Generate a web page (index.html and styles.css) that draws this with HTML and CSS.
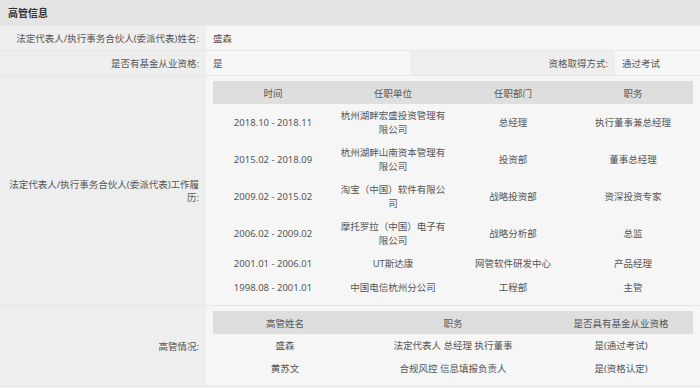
FILE: index.html
```html
<!DOCTYPE html>
<html lang="zh-CN">
<head>
<meta charset="utf-8">
<title>高管信息</title>
<link rel="stylesheet" href="styles.css">
</head>
<body>
<section class="panel">
  <h2 class="panel-title">高管信息</h2>
  <div class="row row-2col">
    <div class="label">法定代表人/执行事务合伙人(委派代表)姓名:</div>
    <div class="value">盛森</div>
  </div>
  <div class="row row-4col">
    <div class="label">是否有基金从业资格:</div>
    <div class="value">是</div>
    <div class="label">资格取得方式:</div>
    <div class="value">通过考试</div>
  </div>
  <div class="row row-2col">
    <div class="label label-wrap">法定代表人/执行事务合伙人(委派代表)工作履历:</div>
    <div class="value value-table">
      <table class="sub work">
        <thead>
          <tr><th>时间</th><th>任职单位</th><th>任职部门</th><th>职务</th></tr>
        </thead>
        <tbody>
          <tr><td>2018.10 - 2018.11</td><td>杭州湖畔宏盛投资管理有限公司</td><td>总经理</td><td>执行董事兼总经理</td></tr>
          <tr><td>2015.02 - 2018.09</td><td>杭州湖畔山南资本管理有限公司</td><td>投资部</td><td>董事总经理</td></tr>
          <tr><td>2009.02 - 2015.02</td><td>淘宝（中国）软件有限公司</td><td>战略投资部</td><td>资深投资专家</td></tr>
          <tr><td>2006.02 - 2009.02</td><td>摩托罗拉（中国）电子有限公司</td><td>战略分析部</td><td>总监</td></tr>
          <tr><td>2001.01 - 2006.01</td><td>UT斯达康</td><td>网管软件研发中心</td><td>产品经理</td></tr>
          <tr><td>1998.08 - 2001.01</td><td>中国电信杭州分公司</td><td>工程部</td><td>主管</td></tr>
        </tbody>
      </table>
    </div>
  </div>
  <div class="row row-2col">
    <div class="label">高管情况:</div>
    <div class="value value-table">
      <table class="sub exec">
        <thead>
          <tr><th class="c-name">高管姓名</th><th class="c-role">职务</th><th class="c-qual">是否具有基金从业资格</th></tr>
        </thead>
        <tbody>
          <tr><td>盛森</td><td>法定代表人 总经理 执行董事</td><td>是(通过考试)</td></tr>
          <tr><td>黄苏文</td><td>合规风控 信息填报负责人</td><td>是(资格认定)</td></tr>
        </tbody>
      </table>
    </div>
  </div>
</section>
</body>
</html>
```

FILE: styles.css
```css
* { box-sizing: border-box; }

html, body {
  margin: 0;
  padding: 0;
  background: #f6f6f6;
}

body {
  font-family: "Noto Sans", "Noto Sans CJK SC", sans-serif;
  font-size: 9.5px;
  color: #555;
  width: 700px;
}

.panel {
  width: 700px;
}

.panel-title {
  margin: 0;
  height: 26px;
  line-height: 26px;
  padding: 0 8px;
  font-size: 10px;
  font-weight: bold;
  color: #333;
  background: #e4e4e4;
  border-bottom: 1px solid #e9e9e9;
}

.row {
  display: grid;
  border-bottom: 1px solid #e6e6e6;
  box-shadow: inset 0 -1px 0 #fbfbfb;
}

.row-2col {
  grid-template-columns: 206px 1fr;
}

.row-4col {
  grid-template-columns: 206px 204px 205px 1fr;
}

.label {
  background: #eeeeee;
  text-align: right;
  padding: 0 7px 0 8px;
  display: flex;
  align-items: center;
  justify-content: flex-end;
  min-height: 24px;
  line-height: 13px;
}

.label-wrap {
  display: flex;
  text-align: right;
}

.value {
  background: #f6f6f6;
  padding: 0 7px;
  display: flex;
  align-items: center;
  min-height: 24px;
}

.value-table {
  display: block;
  padding: 5px 7px 6px;
}

.sub {
  width: 100%;
  border-collapse: collapse;
  table-layout: fixed;
  text-align: center;
}

.sub th {
  background: #dedede;
  font-weight: normal;
  height: 23px;
  padding: 0 4px;
  color: #555;
}

.sub td {
  padding: 5px 4px;
  line-height: 13.5px;
  height: 23px;
}

.work th, .work td {
  width: 25%;
}

.exec td {
  padding: 4px 4px;
  line-height: 15px;
}

.exec .c-name { width: 30%; }
.exec .c-role { width: 40%; }
.exec .c-qual { width: 30%; }
```
